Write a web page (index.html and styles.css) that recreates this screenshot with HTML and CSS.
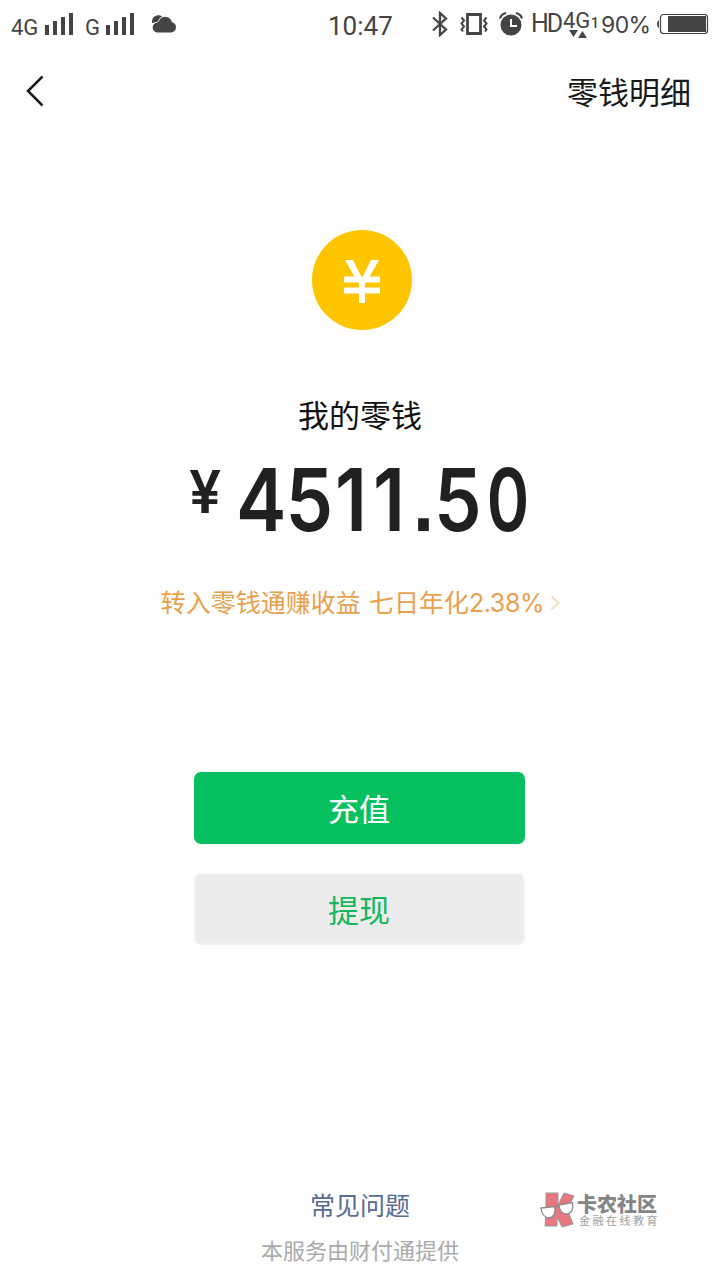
FILE: index.html
```html
<!DOCTYPE html>
<html lang="zh-CN">
<head>
<meta charset="utf-8">
<title>零钱</title>
<link rel="stylesheet" href="styles.css">
</head>
<body>
<div class="screen">
  <header class="status">
    <span class="net">4G</span>
    <svg class="signal" width="29" height="22" viewBox="0 0 29 22"><path d="M0 12h4v10H0zM8 8h4v14H8zM16 4h4v18h-4zM24 0h4v22h-4z"/></svg>
    <span class="net net-second">G</span>
    <svg class="signal" width="29" height="22" viewBox="0 0 29 22"><path d="M0 12h4v10H0zM8 8h4v14H8zM16 4h4v18h-4zM24 0h4v22h-4z"/></svg>
    <svg class="cloud" width="25" height="18" viewBox="0 0 25 18"><path d="M0 8C-.5 3 3 .2 7 .3q2.500.2 3.500 1.700L7 7z"/><path class="cloud-front" d="M6 17.500A5 5 0 0 1 5.300 7.500Q6.500 7 7.200 5.500A6.900 6.900 0 0 1 20 7.300a5.200 5.200 0 0 1-.5 10.200z"/></svg>
    <span class="time">10:47</span>
    <svg class="bluetooth" width="16" height="26" viewBox="0 0 16 26"><path d="M1 6.500l13 12L8 24V2l6 5.500L1 19.500"/></svg>
    <svg class="vibrate" width="28" height="22" viewBox="0 0 28 22"><path class="thick" d="M7.500 1.500h13v19h-13z"/><path d="M1.500 4.500l2.500 3-2.500 3 2.500 3-2.500 3 1.500 2M26.500 4.500l-2.500 3 2.500 3-2.500 3 2.500 3-1.500 2"/></svg>
    <svg class="alarm" width="24" height="24" viewBox="0 0 24 24"><circle cx="12" cy="13" r="10.500"/><path class="ear" d="M1 6.500q1-4 6-5.500M23 6.500q-1-4-6-5.500"/><path class="hand" d="M12 7v7h6"/></svg>
    <span class="hd">HD</span>
    <span class="mobile"><span class="mobile-type">4G</span><svg width="18" height="9" viewBox="0 0 18 9"><path d="M0 0h9L4.500 7zM9 8l4.500-7L18 8z"/></svg></span>
    <span class="sim">1</span>
    <span class="percent">90%</span>
    <svg class="battery" width="52" height="20" viewBox="0 0 52 20"><path d="M2 6v8Q0 13 0 10t2-4z"/><rect class="case" x="3.500" y=".500" width="47" height="19" rx="3"/><path d="M11 2h38v16H11z"/></svg>
  </header>

  <nav class="nav">
    <svg class="back" width="20" height="32" viewBox="0 0 20 32"><path d="M17.500 1.500L3 16l14.500 14.500"/></svg>
    <a class="detail">零钱明细</a>
  </nav>

  <main class="wallet">
    <svg class="coin" width="100" height="100" viewBox="0 0 100 100"><circle cx="50" cy="50" r="50"/><path class="arms" d="M33 30h8l9 18 9-18h8L54 53h-8z"/><path class="bars" d="M32 49.500h36M32 60.500h36M50 50v23"/></svg>
    <h1 class="title">我的零钱</h1>
    <div class="amount"><span class="currency">¥</span><span class="digits"><span class="four">4</span><span class="five">5</span><span class="one">1</span><span class="last-one">1</span><span class="dot">.</span><span class="tenths">5</span><span class="zero">0</span></span></div>
    <a class="promo"><span>转入零钱通赚收益</span><span class="promo-rate">七日年化<span class="rate">2.38%</span></span><svg width="10" height="16" viewBox="0 0 10 16"><path d="M1.500 1.500L8.500 8l-7 6.500"/></svg></a>
    <button class="button recharge">充值</button>
    <button class="button withdraw">提现</button>
  </main>

  <footer class="footer">
    <a class="faq">常见问题</a>
    <p class="provider">本服务由财付通提供</p>
  </footer>

  <div class="brand">
    <svg width="35" height="36" viewBox="0 0 35 36"><path class="k" d="M6 1h12v12L24 1l10 3-7 13 6 15-11 3-5-10v9H5l1-15z"/><path class="lens" d="M1 16l14-1.500q1 11-6.500 11.500Q2 25 1 16zM19 13l13.500-2.500q1.500 10-5 11.500-7.500.5-8.500-9z"/><path class="rim" d="M15 16q2-3 4-1.500"/></svg>
    <div class="brand-text"><strong>卡农社区</strong><small>金融在线教育</small></div>
  </div>
</div>
</body>
</html>
```

FILE: styles.css
```css
* { box-sizing: border-box; }
body {
  margin: 0;
  background: #fefefe;
  font-family: Roboto, "Noto Sans CJK SC", sans-serif;
}
svg { display: block; flex: none; }
.screen {
  position: relative;
  display: flex;
  flex-direction: column;
  width: 720px;
  height: 1280px;
  background: #fefefe;
}
.status {
  display: flex;
  align-items: flex-start;
  height: 50px;
  padding-left: 11px;
  color: #444;
  fill: #444;
  white-space: nowrap;
}
.status > * { flex: none; }
.net { width: 34px; margin-top: 15px; font-size: 22px; line-height: 26px; }
.net-second { width: 21px; margin-left: 11px; }
.signal { margin-top: 13px; }
.cloud { margin: 15px 0 0 17px; }
.cloud-front { stroke: #fefefe; stroke-width: 1.5; paint-order: stroke; }
.time {
  width: 64px;
  margin: 10px 0 0 151px;
  font-size: 26px;
  line-height: 32px;
}
.bluetooth { margin: 11px 0 0 40px; fill: none; stroke: #444; stroke-width: 2.300; }
.vibrate { margin: 13px 0 0 12px; fill: none; stroke: #444; stroke-width: 2; }
.thick { stroke-width: 2.800; }
.alarm { margin: 12px 0 0 11px; }
.ear { fill: none; stroke: #444; stroke-width: 2.200; }
.hand { fill: none; stroke: #fff; stroke-width: 2; }
.hd {
  width: 32px;
  margin: 9px 0 0 8px;
  font-size: 25px;
  letter-spacing: -2px;
  line-height: 30px;
}
.mobile { display: flex; flex-direction: column; width: 28px; margin-top: 9px; }
.mobile-type { height: 21px; font-size: 22px; line-height: 24px; }
.mobile svg { margin-left: 6px; }
.sim { width: 10px; margin-top: 15px; font-size: 14px; font-weight: 500; line-height: 16px; }
.percent {
  width: 56px;
  margin-top: 11px;
  font-family: Inter, Roboto, sans-serif;
  font-size: 23px;
  letter-spacing: -.6px;
  line-height: 28px;
}
.battery { margin-top: 14px; }
.case { fill: none; stroke: #444; stroke-width: 1.200; }

.nav {
  display: flex;
  align-items: center;
  justify-content: space-between;
  height: 82px;
  padding: 0 29px 0 25px;
}
.back { fill: none; stroke: #1b1b1b; stroke-width: 2.500; }
.detail { padding-top: 5px; color: #191919; font-size: 31px; line-height: 40px; }

.wallet {
  display: flex;
  flex-direction: column;
  align-items: center;
  padding-top: 98px;
}
.coin { margin-left: 4px; fill: #fdc400; }
.arms { fill: #fff; }
.bars { fill: none; stroke: #fff; stroke-width: 6; }
.title {
  margin: 66px 0 0;
  color: #111;
  font-size: 31px;
  font-weight: 400;
  line-height: 42px;
}
.amount {
  display: flex;
  width: 342px;
  height: 92px;
  margin-top: 16px;
  color: #202020;
  font-family: Inter, Roboto, sans-serif;
  font-weight: 600;
  white-space: nowrap;
}
.currency { flex: none; width: 47px; font-size: 59px; line-height: 76px; transform: scaleX(.97); transform-origin: left; }
.digits { flex: none; font-size: 86px; line-height: 92px; transform: scaleX(.88); transform-origin: left; }
.four { letter-spacing: -1px; }
.five { letter-spacing: 2px; }
.one { letter-spacing: 7px; }
.last-one { letter-spacing: 9px; }
.dot { font-family: "Liberation Sans", sans-serif; font-weight: 700; line-height: 1; }
.tenths { letter-spacing: 6px; }
.zero { display: inline-block; transform: scaleX(.85); transform-origin: left; }
.promo {
  display: flex;
  align-items: center;
  height: 36px;
  margin: 39px 0 0 1px;
  color: #e8a04c;
  font-size: 25px;
  line-height: 36px;
}
.promo > span:first-child { padding-top: 1px; }
.promo-rate { margin-left: 8px; }
.rate { font-family: Inter, Roboto, sans-serif; letter-spacing: -.4px; }
.promo svg { margin-left: 6px; fill: none; stroke: #f7dcbd; stroke-width: 1.800; }
.button {
  width: 331px;
  height: 72px;
  border: 0;
  border-radius: 7px;
  padding: 5px 0 0;
  margin-right: 2px;
  font-family: inherit;
  font-size: 31px;
  line-height: 44px;
}
.recharge { margin-top: 151px; background: #07c160; color: #fff; }
.withdraw { margin-top: 29px; border: 2px solid #f1f1f1; background: #ececec; color: #15b65d; }

.footer {
  display: flex;
  flex-direction: column;
  align-items: center;
  margin-top: auto;
  padding-bottom: 12px;
}
.faq { color: #576b95; font-size: 25px; line-height: 36px; }
.provider { margin: 11px 0 0; color: #aaa; font-size: 22px; line-height: 32px; }

.brand {
  position: absolute;
  left: 540px;
  top: 1192px;
  display: flex;
  gap: 2px;
}
.k { fill: #e8777f; stroke: #999; stroke-width: 1; }
.lens { fill: #fff; stroke: #8c8c8c; stroke-width: 1.300; }
.rim { fill: none; stroke: #8c8c8c; stroke-width: 1.500; }
.brand-text { display: flex; flex-direction: column; color: #858585; white-space: nowrap; }
.brand-text strong { height: 22px; font-size: 20px; font-weight: 900; line-height: 26px; }
.brand-text small { padding-left: 2px; color: #a0a0a0; font-size: 11px; letter-spacing: 2.500px; line-height: 16px; }
```
